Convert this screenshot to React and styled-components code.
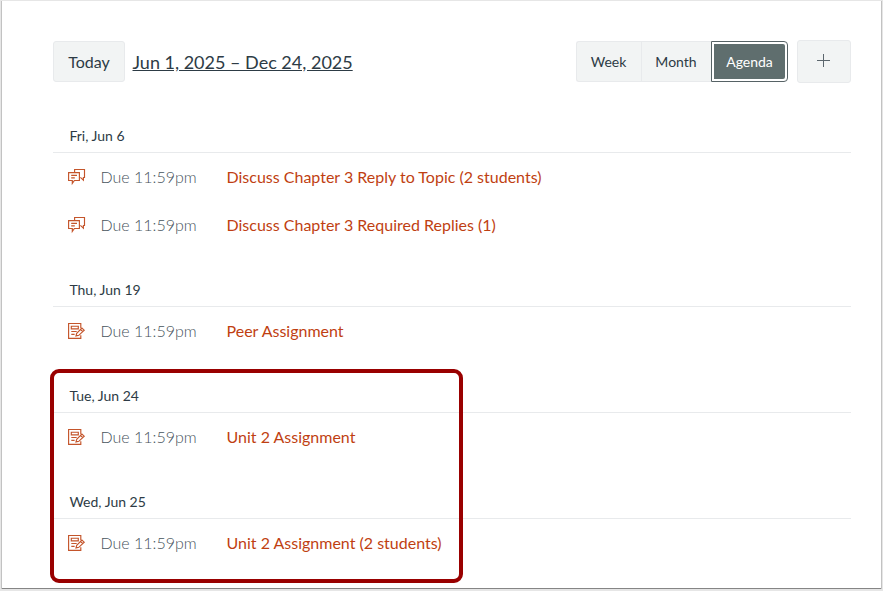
import React from "react";
import styled, { createGlobalStyle } from "styled-components";

const days = [
  {
    date: "Fri, Jun 6",
    events: [
      {
        type: "discussion",
        due: "Due 11:59pm",
        title: "Discuss Chapter 3 Reply to Topic (2 students)",
      },
      {
        type: "discussion",
        due: "Due 11:59pm",
        title: "Discuss Chapter 3 Required Replies (1)",
      },
    ],
  },
  {
    date: "Thu, Jun 19",
    events: [
      { type: "assignment", due: "Due 11:59pm", title: "Peer Assignment" },
    ],
  },
  {
    date: "Tue, Jun 24",
    events: [
      { type: "assignment", due: "Due 11:59pm", title: "Unit 2 Assignment" },
    ],
  },
  {
    date: "Wed, Jun 25",
    events: [
      {
        type: "assignment",
        due: "Due 11:59pm",
        title: "Unit 2 Assignment (2 students)",
      },
    ],
  },
];

function DiscussionIcon() {
  return (
    <Icon viewBox="0 0 18 18" aria-hidden="true">
      <path d="M6.6 4.6V1.5H16.5V9.5H15.4V12.2L12.4 9.4" />
      <path d="M0.6 4.6H11.4V12.5H6.4L4.3 15.4V12.5H0.6Z" />
      <path d="M3.2 7.4H9M3.2 9.9H6.8" />
    </Icon>
  );
}

function AssignmentIcon() {
  return (
    <Icon viewBox="0 0 18 18" aria-hidden="true">
      <path d="M12.8 6.2V1.5H0.6V16.4H12.8V13.2" />
      <path d="M3.3 4.2H10.3V6.8H3.3ZM3.3 9.5H8.7M3.3 12.3H6.6" />
      <path d="M8 13.9L8.7 11.3L13.9 6.1L16.2 8.2L10.8 13.3ZM12.5 7.5L14.8 9.6" />
    </Icon>
  );
}

export default function App() {
  return (
    <>
      <GlobalStyle />
      <Page>
        <Toolbar>
          <TodayButton>Today</TodayButton>
          <DateRange>Jun 1, 2025 – Dec 24, 2025</DateRange>
          <ViewSwitch>
            <ViewButton $width={65}>Week</ViewButton>
            <ViewButton $width={70}>Month</ViewButton>
            <ViewButton $width={77} $active>
              <span>Agenda</span>
            </ViewButton>
          </ViewSwitch>
          <AddButton aria-label="Add event">
            <svg width="13" height="13" viewBox="0 0 13 13">
              <path d="M6.5 0V13M0 6.5H13" stroke="#5c666d" />
            </svg>
          </AddButton>
        </Toolbar>
        <Agenda>
          {days.map((day) => (
            <Day key={day.date}>
              <DayHeading>{day.date}</DayHeading>
              {day.events.map((event) => (
                <EventRow key={event.title}>
                  {event.type === "discussion" ? (
                    <DiscussionIcon />
                  ) : (
                    <AssignmentIcon />
                  )}
                  <Due>{event.due}</Due>
                  <Title>{event.title}</Title>
                </EventRow>
              ))}
            </Day>
          ))}
        </Agenda>
        <Highlight />
      </Page>
    </>
  );
}

const GlobalStyle = createGlobalStyle`
  * {
    box-sizing: border-box;
  }
  body {
    margin: 0;
    background: #e6e6e6;
    overflow: hidden;
    font-family: Lato, "Liberation Sans", sans-serif;
    color: #2d3b45;
  }
  button {
    font-family: inherit;
    color: inherit;
    padding: 0;
  }
`;

const Page = styled.div`
  position: relative;
  width: 879px;
  height: 588px;
  margin: 1px 2px 0;
  padding: 39px 30px 0 51px;
  background: #fff;
  border-bottom: 1px solid #858585;
  box-shadow: -1px 0 0 #c2c2c2, 1px 0 0 #c2c2c2, 0 1px 0 #bdbdbd;
`;

const Toolbar = styled.div`
  display: flex;
  align-items: center;
  height: 43px;
`;

const TodayButton = styled.button`
  width: 72px;
  height: 41px;
  background: #f2f4f4;
  border: 1px solid #e8eaec;
  border-radius: 3px;
  font-size: 16px;
`;

const DateRange = styled.a`
  margin-left: 7.5px;
  font-size: 18px;
  text-decoration: underline;
`;

const ViewSwitch = styled.div`
  display: flex;
  margin-left: auto;
`;

const ViewButton = styled.button`
  width: ${(props) => props.$width}px;
  height: 41px;
  padding: ${(props) => (props.$active ? "2px" : "0 1px 0 0")};
  background: ${(props) => (props.$active ? "#fff" : "#f2f4f4")};
  border: 1px solid ${(props) => (props.$active ? "#566265" : "#e8eaec")};
  border-right-width: ${(props) => (props.$active ? "1px" : "0")};
  font-size: 14px;

  &:first-child {
    border-radius: 3px 0 0 3px;
  }
  &:last-child {
    border-radius: 0 4px 4px 0;
  }

  span {
    display: flex;
    align-items: center;
    justify-content: center;
    height: 100%;
    background: #5f6e6e;
    color: #fff;
    border-radius: 0 2px 2px 0;
  }
`;

const AddButton = styled.button`
  display: flex;
  align-items: center;
  justify-content: center;
  width: 54px;
  height: 43px;
  margin-left: 9px;
  padding: 0 1px 2px 0;
  background: #f2f4f4;
  border: 1px solid #e8eaec;
  border-radius: 3px;
`;

const Agenda = styled.div`
  margin-top: 36px;
`;

const Day = styled.section`
  margin-bottom: 24px;
`;

const DayHeading = styled.h2`
  height: 34px;
  margin: 0;
  padding-left: 16.4px;
  border-bottom: 1px solid #e8eaec;
  font-size: 14px;
  font-weight: 400;
  line-height: 33px;
`;

const EventRow = styled.div`
  display: grid;
  grid-template-columns: 32.5px 126px 1fr;
  align-items: center;
  height: 48px;
  padding-left: 15px;
  font-size: 16px;
`;

const Icon = styled.svg`
  width: 18px;
  height: 18px;
  fill: none;
  stroke: #c4552b;
  stroke-width: 1.15;
`;

const Due = styled.span`
  padding-bottom: 2px;
  font-weight: 300;
  color: #47535c;
`;

const Title = styled.a`
  padding-bottom: 2px;
  color: #bf3f12;
`;

const Highlight = styled.div`
  position: absolute;
  left: 48px;
  top: 368px;
  width: 413px;
  height: 214px;
  border: 4px solid #990000;
  border-radius: 9px;
`;
